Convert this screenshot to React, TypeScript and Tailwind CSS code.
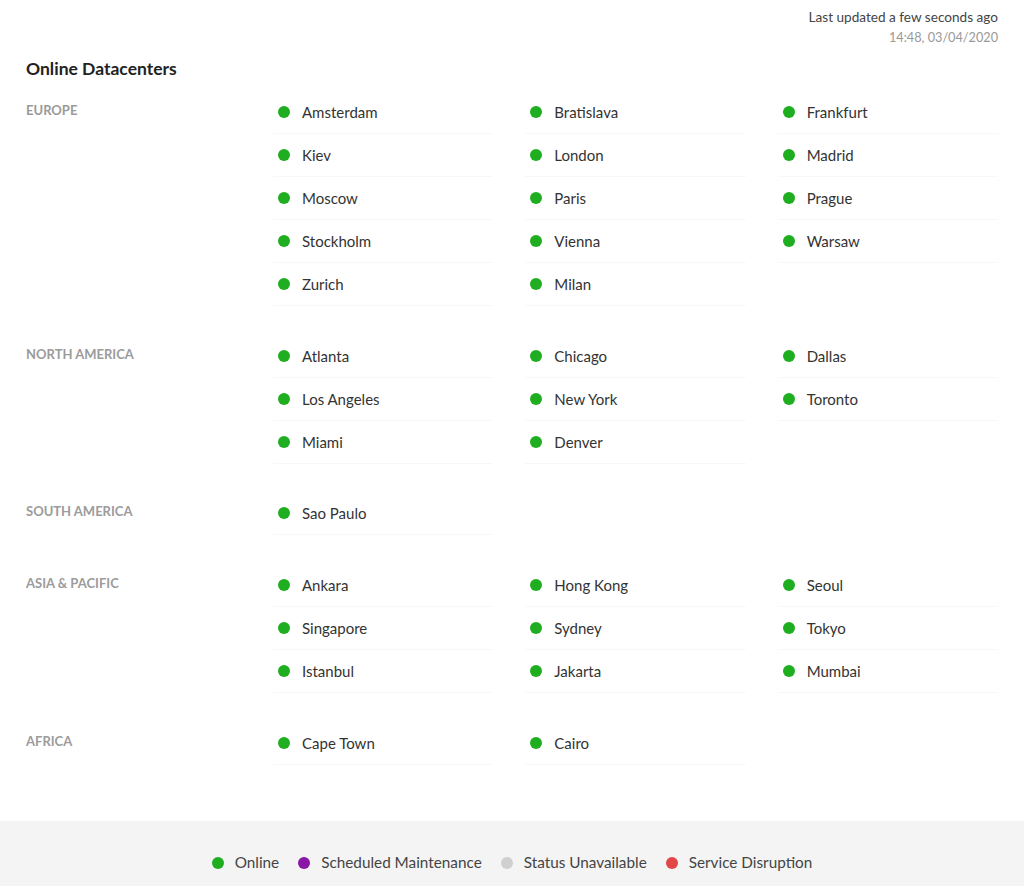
import React from 'react';

type Region = { name: string; cities: string[] };

const regions: Region[] = [
  {
    name: 'Europe',
    cities: [
      'Amsterdam', 'Bratislava', 'Frankfurt',
      'Kiev', 'London', 'Madrid',
      'Moscow', 'Paris', 'Prague',
      'Stockholm', 'Vienna', 'Warsaw',
      'Zurich', 'Milan',
    ],
  },
  {
    name: 'North America',
    cities: ['Atlanta', 'Chicago', 'Dallas', 'Los Angeles', 'New York', 'Toronto', 'Miami', 'Denver'],
  },
  { name: 'South America', cities: ['Sao Paulo'] },
  {
    name: 'Asia & Pacific',
    cities: ['Ankara', 'Hong Kong', 'Seoul', 'Singapore', 'Sydney', 'Tokyo', 'Istanbul', 'Jakarta', 'Mumbai'],
  },
  { name: 'Africa', cities: ['Cape Town', 'Cairo'] },
];

const legend = [
  { label: 'Online', dot: 'bg-[#1fae1f]' },
  { label: 'Scheduled Maintenance', dot: 'bg-[#8a16a8]' },
  { label: 'Status Unavailable', dot: 'bg-[#cfcfcf]' },
  { label: 'Service Disruption', dot: 'bg-[#e24646]' },
];

const Dot = ({ className }: { className: string }) => (
  <span className={`inline-block w-3 h-3 rounded-full shrink-0 ${className}`} />
);

export default function App() {
  return (
    <div className="w-full min-h-[886px] bg-white flex flex-col font-['Lato','Liberation_Sans',sans-serif]">
      <div className="px-[26px]">
        {/* last updated */}
        <div className="pt-[7px] text-right leading-5">
          <div className="text-[13.6px] text-[#444]">Last updated a few seconds ago</div>
          <div className="text-[12.7px] text-[#999]">14:48, 03/04/2020</div>
        </div>

        <h1 className="mt-3 text-[17.5px] leading-5 font-bold text-[#222]">Online Datacenters</h1>

        <div className="mt-3 flex flex-col gap-[28.7px]">
          {regions.map((region) => (
            <div key={region.name} className="flex">
              <div className="w-[247px] shrink-0 pt-[11px] text-[13px] leading-4 font-bold uppercase text-[#9b9b9b]">
                {region.name}
              </div>
              <div className="flex-1 grid grid-cols-3 gap-x-[32px]">
                {region.cities.map((city) => (
                  <div
                    key={city}
                    className="flex items-center gap-3 pl-[5px] pt-[11px] pb-[11px] border-b border-[#f8f8f8] text-[15px] leading-5 text-[#333]"
                  >
                    <Dot className="bg-[#1fae1f]" />
                    <span>{city}</span>
                  </div>
                ))}
              </div>
            </div>
          ))}
        </div>
      </div>

      <footer className="mt-auto h-[65px] bg-[#f4f4f4] flex items-center justify-center gap-[19px] pt-[18px] text-[15.3px] text-[#444]">
        {legend.map((item) => (
          <div key={item.label} className="flex items-center gap-[11px]">
            <Dot className={item.dot} />
            <span>{item.label}</span>
          </div>
        ))}
      </footer>
    </div>
  );
}
